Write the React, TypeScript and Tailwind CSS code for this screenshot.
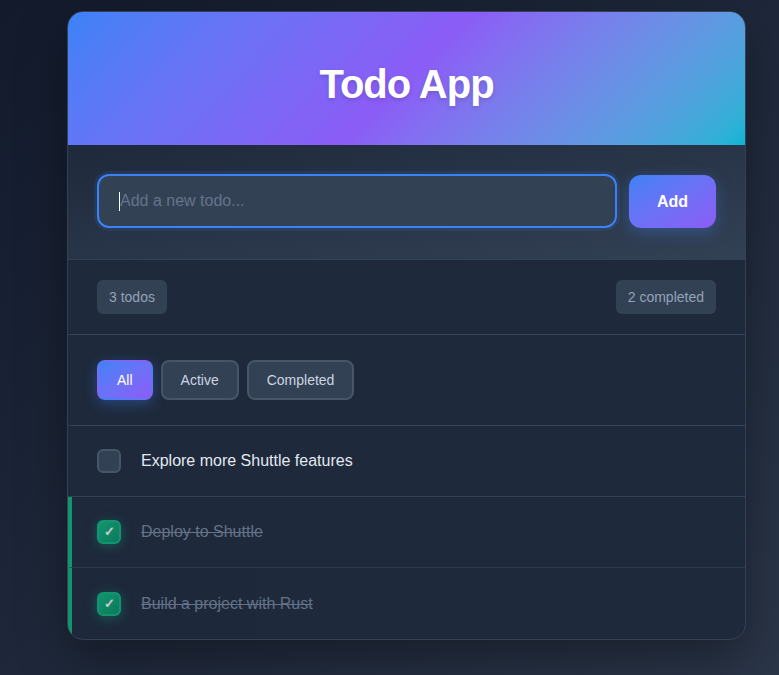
import React, { useState } from 'react'

type Todo = { id: number; title: string; done: boolean }

const initialTodos: Todo[] = [
  { id: 3, title: 'Explore more Shuttle features', done: false },
  { id: 2, title: 'Deploy to Shuttle', done: true },
  { id: 1, title: 'Build a project with Rust', done: true },
]

const filters = ['All', 'Active', 'Completed']

export default function App() {
  const [todos, setTodos] = useState<Todo[]>(initialTodos)
  const [filter, setFilter] = useState('All')
  const [text, setText] = useState('')

  const completed = todos.filter(t => t.done).length
  const visible = todos.filter(t =>
    filter === 'All' ? true : filter === 'Active' ? !t.done : t.done
  )

  const toggle = (id: number) =>
    setTodos(todos.map(t => (t.id === id ? { ...t, done: !t.done } : t)))

  const add = () => {
    if (!text.trim()) return
    setTodos([{ id: Date.now(), title: text.trim(), done: false }, ...todos])
    setText('')
  }

  return (
    <div
      className="min-h-screen bg-linear-to-br from-[#121a2c] to-[#2b3649] pt-[11px] pb-[36px]"
      style={{ fontFamily: '"Liberation Sans", Arial, sans-serif' }}
    >
      <div className="ml-[67px] w-[679px] rounded-2xl border border-[#334155] bg-[#1e293b] overflow-hidden shadow-[0_20px_50px_rgba(0,0,0,0.35)]">
        <div className="h-[133px] flex items-center justify-center pt-[10px] bg-linear-135 from-[#3b82f6] via-[#8b5cf6] to-[#06b6d4]">
          <h1 className="text-[40px] font-bold text-white tracking-[-0.025em] [text-shadow:0_2px_4px_rgba(0,0,0,0.15)]">
            Todo App
          </h1>
        </div>

        <div className="flex gap-3 px-[29px] pt-[29px] pb-[31px] border-b border-[#334155] bg-linear-to-br from-[#1e293b] to-[#334155]">
          <div className="flex-1 h-[54px] rounded-xl border-2 border-[#3b82f6] bg-[#334155] shadow-[0_0_0_3px_rgba(59,130,246,0.12)] flex items-center px-5">
            <span className="w-px h-[19px] bg-white" />
            <input
              value={text}
              onChange={e => setText(e.target.value)}
              onKeyDown={e => e.key === 'Enter' && add()}
              placeholder="Add a new todo..."
              className="flex-1 bg-transparent outline-none text-base text-[#e2e8f0] placeholder:text-[#64748b]"
            />
          </div>
          <button
            onClick={add}
            className="w-[87px] h-[53px] mt-px rounded-xl bg-linear-to-br from-[#3b82f6] to-[#8b5cf6] text-white font-bold text-base shadow-[0_4px_15px_rgba(59,130,246,0.35)]"
          >
            Add
          </button>
        </div>

        <div className="flex justify-between px-[29px] py-5 border-b border-[#334155]">
          <span className="h-[34px] px-3 flex items-center rounded-md bg-[#334155] text-sm text-[#94a3b8]">
            {todos.length} todos
          </span>
          <span className="h-[34px] px-3 flex items-center rounded-md bg-[#334155] text-sm text-[#94a3b8]">
            {completed} completed
          </span>
        </div>

        <div className="flex gap-2 px-[29px] py-[25px] border-b border-[#334155]">
          {filters.map(f =>
            f === filter ? (
              <button
                key={f}
                onClick={() => setFilter(f)}
                className="h-[40px] px-[18px] rounded-lg border-2 border-transparent bg-linear-to-br from-[#3b82f6] to-[#8b5cf6] text-sm text-white shadow-[0_4px_14px_rgba(59,130,246,0.35)]"
              >
                {f}
              </button>
            ) : (
              <button
                key={f}
                onClick={() => setFilter(f)}
                className="h-[40px] px-[18px] rounded-lg border-2 border-[#475569] bg-[#334155] text-sm text-[#cbd5e1]"
              >
                {f}
              </button>
            )
          )}
        </div>

        <div>
          {visible.map((t, i) => (
            <div
              key={t.id}
              className={`flex items-center gap-5 pr-[29px] ${
                i < visible.length - 1 ? 'h-[71px] border-b border-[#334155]' : 'h-[71px]'
              } ${t.done ? 'border-l-4 border-l-[#10b981] pl-[25px] opacity-75' : 'pl-[29px]'}`}
            >
              {t.done ? (
                <button
                  onClick={() => toggle(t.id)}
                  className="w-6 h-6 rounded-md border-2 border-[#10b981] bg-linear-to-br from-[#10b981] to-[#059669] flex items-center justify-center text-white text-[13px] font-bold shadow-[0_2px_12px_rgba(16,185,129,0.45)]"
                >
                  ✓
                </button>
              ) : (
                <button
                  onClick={() => toggle(t.id)}
                  className="w-6 h-6 rounded-md border-2 border-[#475569] bg-[#334155]"
                />
              )}
              <span
                className={`text-base ${
                  t.done ? 'line-through text-[#7c8aa0]' : 'text-[#e2e8f0]'
                }`}
              >
                {t.title}
              </span>
            </div>
          ))}
        </div>
      </div>
    </div>
  )
}
